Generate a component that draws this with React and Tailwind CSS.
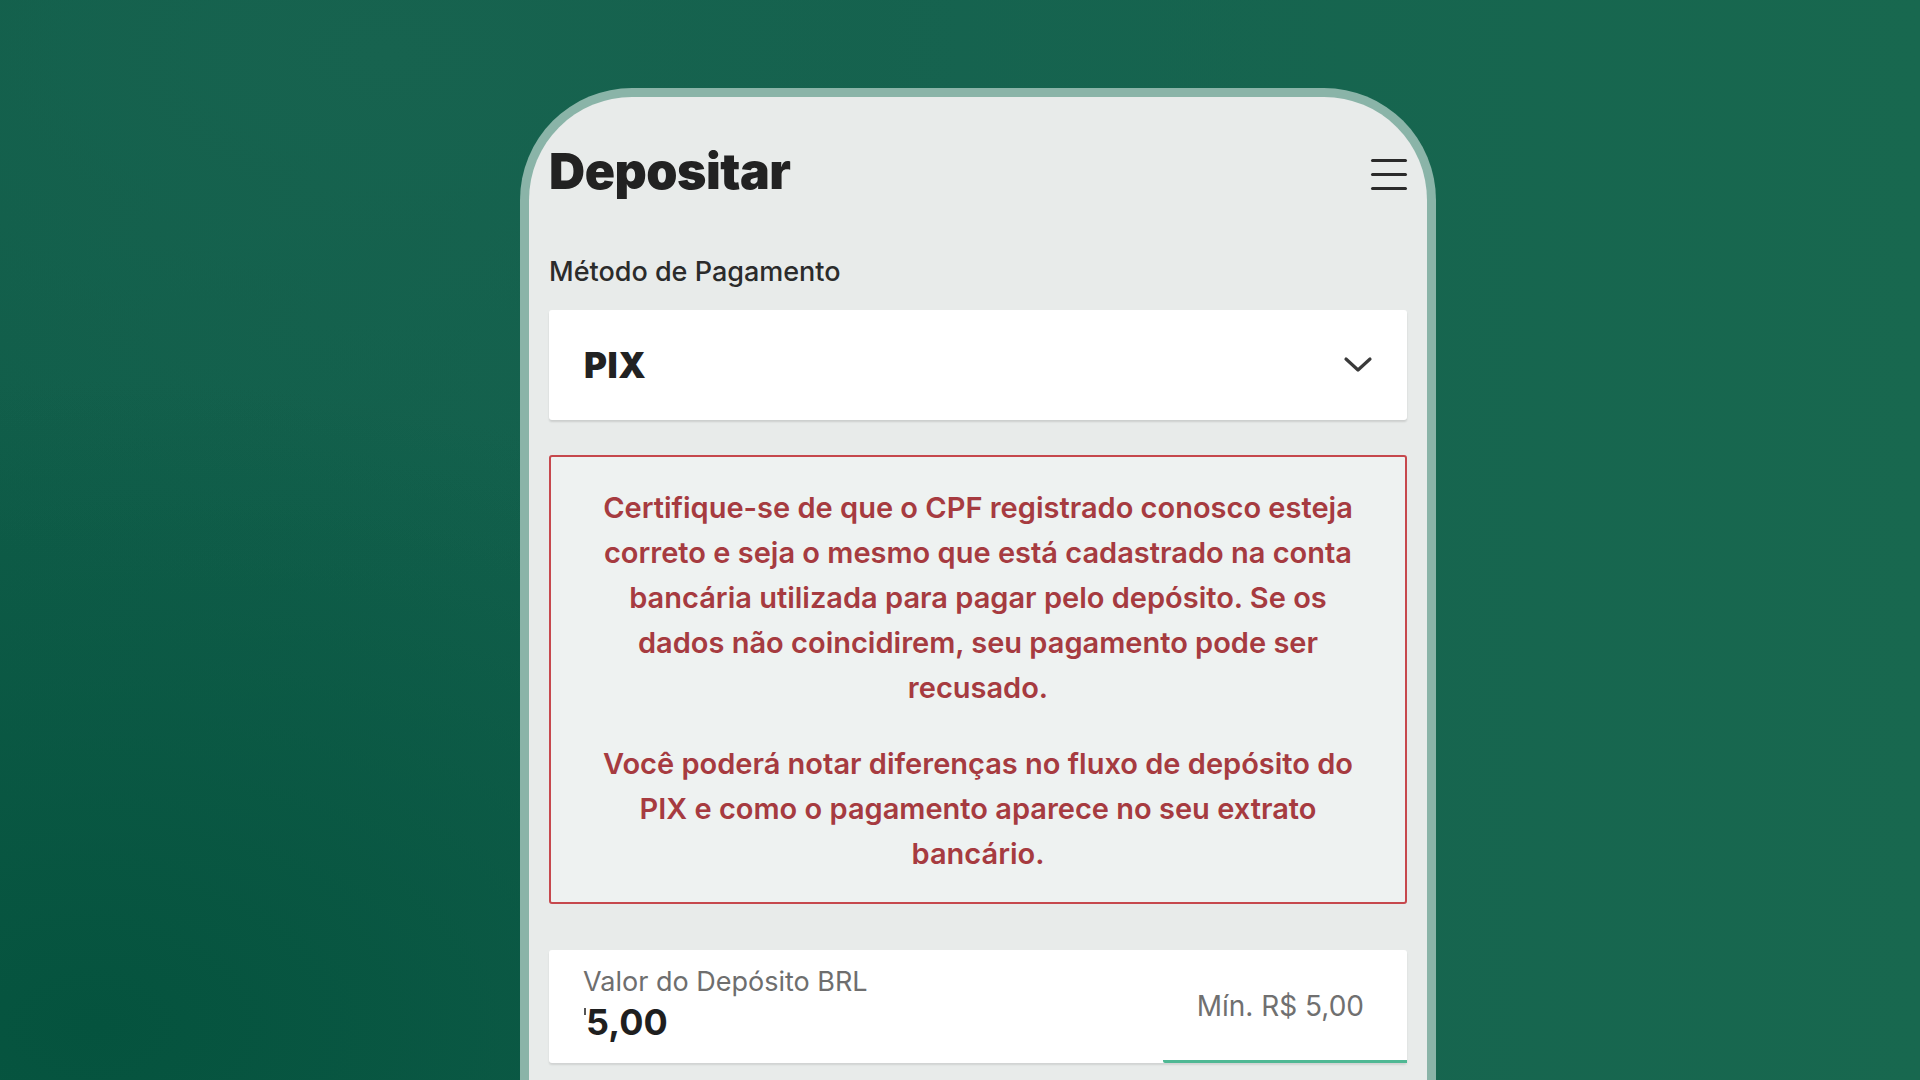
export default function App() {
  const p1 = [
    "Certifique-se de que o CPF registrado conosco esteja",
    "correto e seja o mesmo que está cadastrado na conta",
    "bancária utilizada para pagar pelo depósito. Se os",
    "dados não coincidirem, seu pagamento pode ser",
    "recusado.",
  ];
  const p2 = [
    "Você poderá notar diferenças no fluxo de depósito do",
    "PIX e como o pagamento aparece no seu extrato",
    "bancário.",
  ];
  return (
    <div
      className="w-[1920px] h-[1080px] overflow-hidden flex pl-[520px] pt-[88px] bg-[radial-gradient(ellipse_55%_60%_at_5%_95%,#05533e,transparent),radial-gradient(ellipse_50%_50%_at_20%_5%,#17634f,transparent),linear-gradient(90deg,#105d49,#15634f_50%,#18684f)]"
      style={{ fontFamily: "Inter, 'Noto Sans', sans-serif" }}
    >
      <div className="w-[916px] h-[1100px] shrink-0 border-[9px] border-b-0 border-[#8ab4a8] rounded-t-[112px] bg-[#e8ebea] px-[20px] pt-[46px]">
        <div className="flex items-center justify-between h-[56px]">
          <h1 className="text-[50px] leading-none font-black text-[#222] tracking-[-0.5px]">Depositar</h1>
          <div className="flex flex-col gap-[11px] mt-[6px]">
            <span className="block w-[36px] h-[3px] bg-[#2a2a2a] rounded-full"></span>
            <span className="block w-[36px] h-[3px] bg-[#2a2a2a] rounded-full"></span>
            <span className="block w-[36px] h-[3px] bg-[#2a2a2a] rounded-full"></span>
          </div>
        </div>
        <div className="mt-[57px] text-[27px] leading-[32px] font-medium text-[#2b2b2b]">Método de Pagamento</div>
        <div className="mt-[22px] h-[110px] bg-white rounded-[3px] shadow-[0_2px_2px_rgba(0,0,0,0.12)] flex items-center justify-between pl-[35px] pr-[34px]">
          <span className="text-[35px] font-black text-[#222] tracking-[0.5px]">PIX</span>
          <svg width="30" height="18" viewBox="0 0 30 18" fill="none">
            <path d="M3 3 L15 14 L27 3" stroke="#3a3a3a" strokeWidth="3.2" strokeLinecap="round" strokeLinejoin="round" />
          </svg>
        </div>
        <div className="mt-[35px] h-[449px] border-2 border-[#c6484d] rounded-[3px] bg-[#eef2f1] pt-[28px] text-center text-[29px] leading-[45px] font-semibold text-[#a63b40]">
          <div>
            {p1.map((l) => (
              <div key={l} className="whitespace-nowrap">{l}</div>
            ))}
          </div>
          <div className="mt-[31px]">
            {p2.map((l) => (
              <div key={l} className="whitespace-nowrap">{l}</div>
            ))}
          </div>
        </div>
        <div className="relative mt-[46px] h-[113px] bg-white rounded-[3px] shadow-[0_2px_2px_rgba(0,0,0,0.1)] flex items-center justify-between pl-[34px] pr-[43px]">
          <div className="flex flex-col -mt-[6px]">
            <span className="text-[27px] leading-[32px] text-[#6e6e6e]">Valor do Depósito BRL</span>
            <span className="relative mt-[4px] pl-[3px] text-[36px] leading-[40px] font-bold text-[#1f1f1f]">
              <span className="absolute left-[1px] top-[6px] w-[2px] h-[7px] bg-[#555]"></span>
              5,00
            </span>
          </div>
          <span className="text-[28px] text-[#707070] mb-[2px]">Mín. R$ 5,00</span>
          <div className="absolute right-0 bottom-0 w-[244px] h-[3px] bg-[#4fb894] rounded-bl-[2px]"></div>
        </div>
      </div>
    </div>
  );
}
